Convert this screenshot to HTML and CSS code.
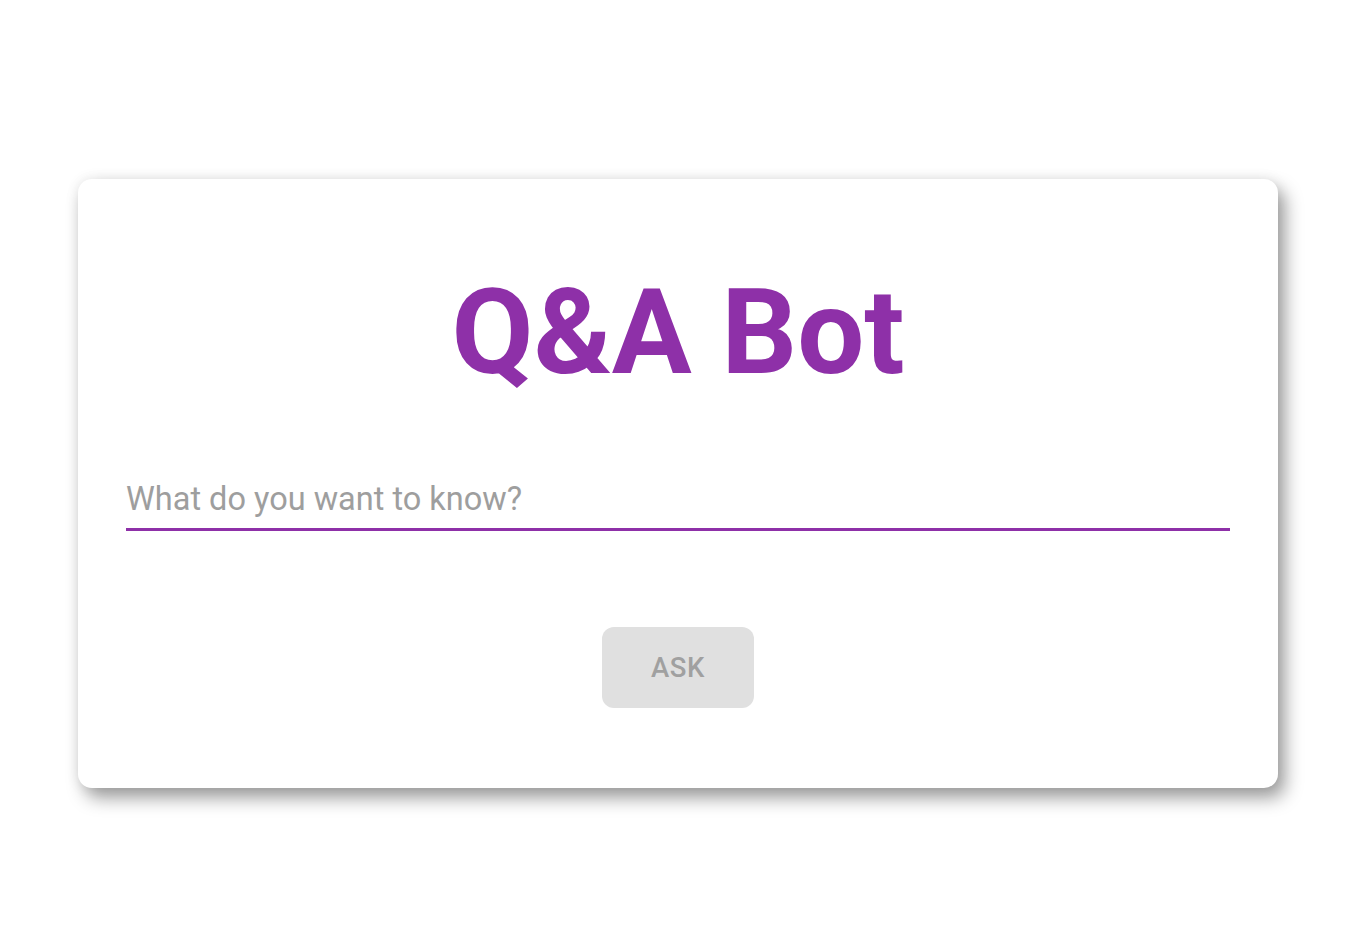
FILE: index.html
```html
<!DOCTYPE html>
<html>
<head>
<meta charset="utf-8">
<link rel="stylesheet" href="styles.css">
</head>
<body>
<main class="page">
  <section class="card">
    <h1 class="title">Q&amp;A Bot</h1>
    <div class="field">
      <input class="field-input" type="text" placeholder="What do you want to know?">
    </div>
    <div class="actions">
      <button class="ask-btn" disabled>ASK</button>
    </div>
  </section>
</main>
</body>
</html>
```
FILE: styles.css
```css
* { box-sizing: border-box; }
html, body { margin: 0; padding: 0; background: #ffffff; }
body { font-family: Roboto, "Noto Sans", sans-serif; }
.page {
  min-height: 940px;
  padding: 179px 0 0 78px;
}
.card {
  width: 1200px;
  height: 609px;
  background: #ffffff;
  border-radius: 14px;
  box-shadow: 7px 10px 18px rgba(0,0,0,0.38), 0 0 14px rgba(0,0,0,0.08);
  padding: 0 48px;
  display: flex;
  flex-direction: column;
}
.title {
  margin: 89px 0 0 0;
  text-align: center;
  font-size: 119px;
  line-height: 130px;
  font-weight: 700;
  color: #8e30a8;
  letter-spacing: 0;
}
.field {
  margin-top: 78px;
}
.field-input {
  display: block;
  width: 100%;
  border: none;
  border-bottom: 3px solid #8e30a8;
  outline: none;
  background: transparent;
  font-family: Roboto, sans-serif;
  font-size: 32.5px;
  height: 55px;
  padding: 0 0 6px 0;
  color: #333;
}
.field-input::placeholder { color: #9e9e9e; }
.actions {
  display: flex;
  justify-content: center;
  margin-top: 96px;
}
.ask-btn {
  width: 152px;
  height: 81px;
  border: none;
  border-radius: 12px;
  background: #e0e0e0;
  color: #a0a0a0;
  font-family: Roboto, sans-serif;
  font-weight: 500;
  font-size: 27.5px;
  letter-spacing: 0.5px;
  padding: 0;
}
```
